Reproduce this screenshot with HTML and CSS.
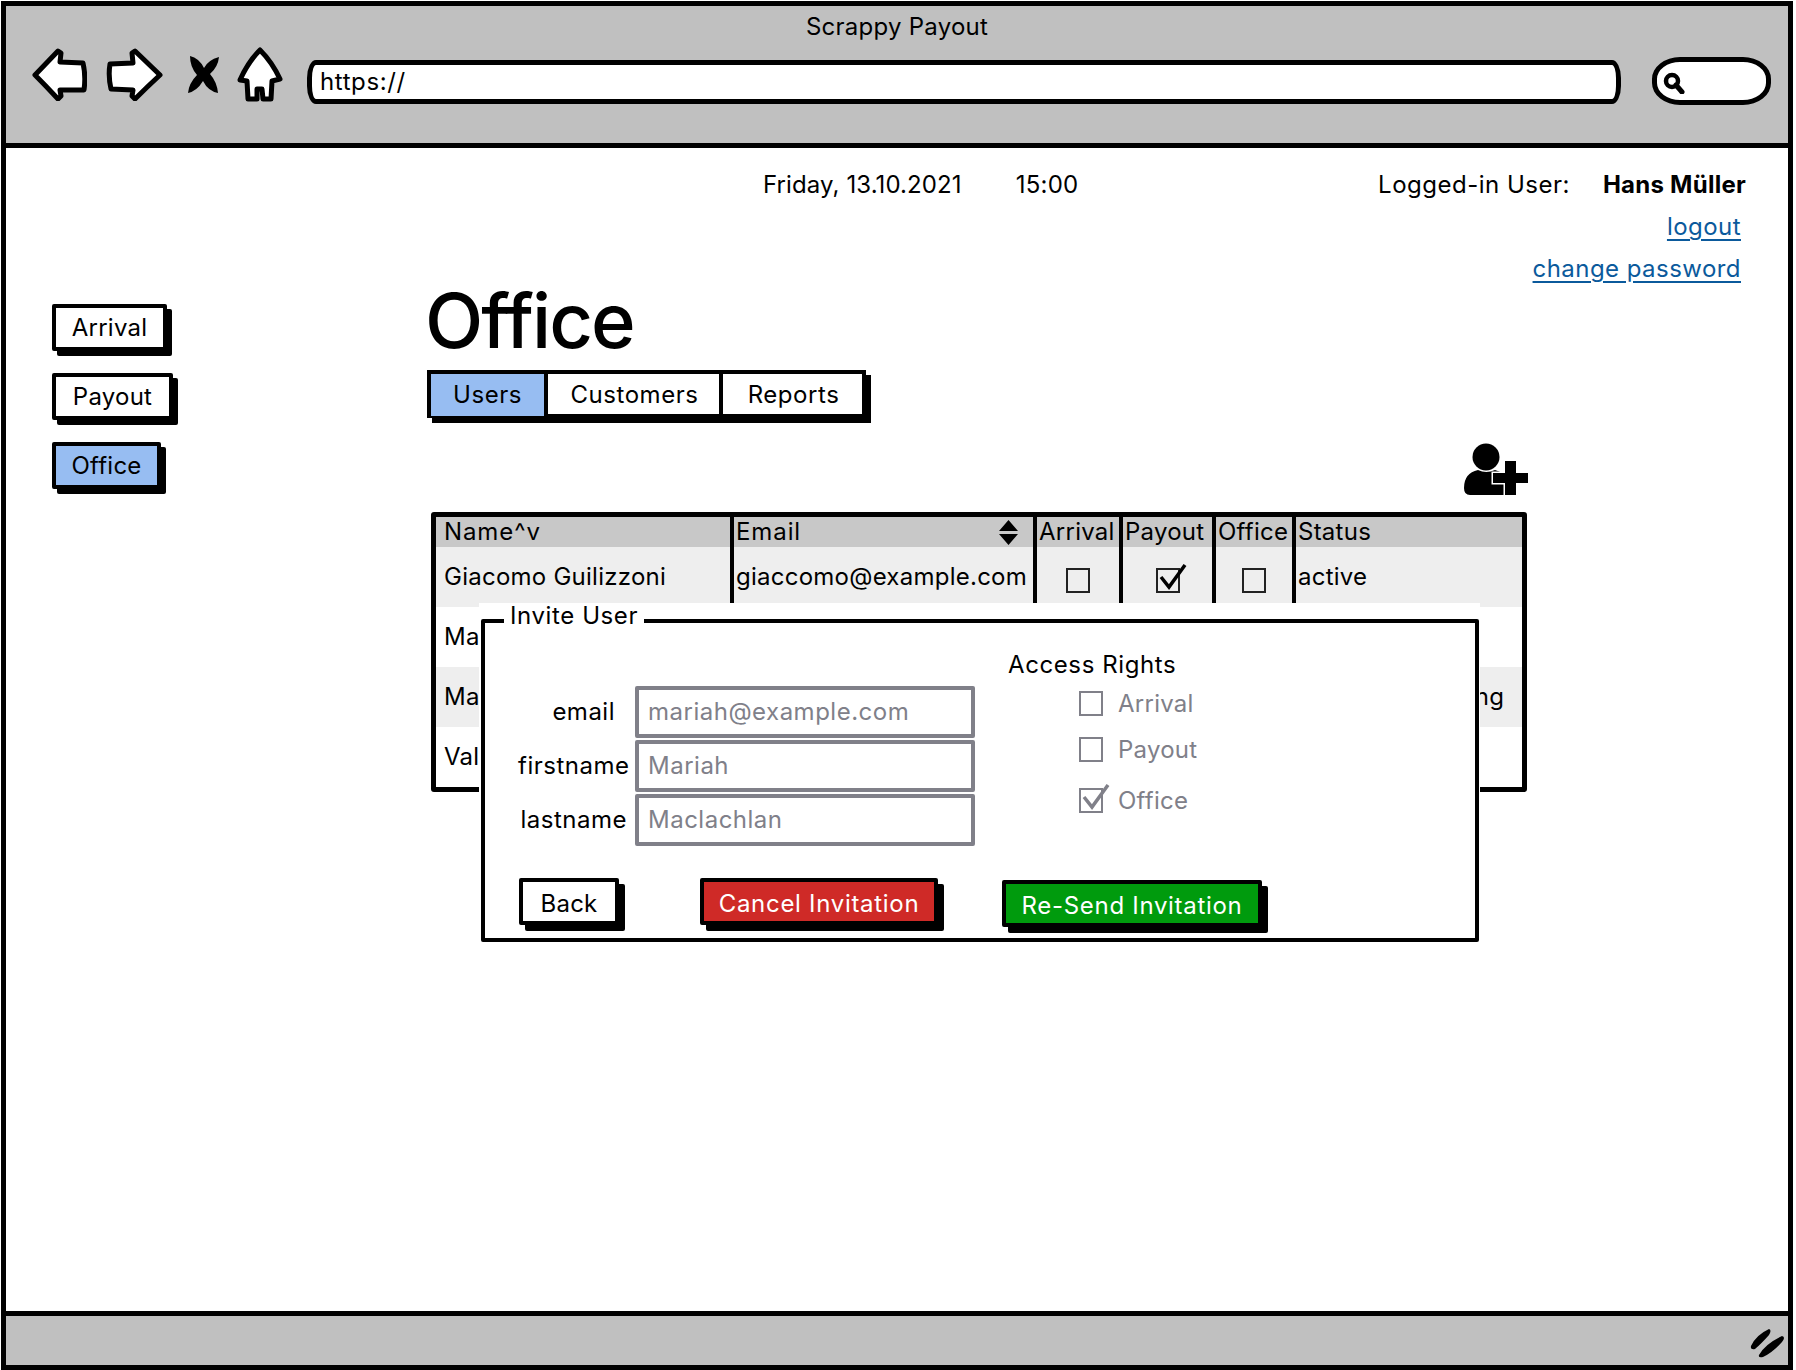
FILE: index.html
```html
<!DOCTYPE html>
<html lang="en">
<head>
  <meta charset="UTF-8">
  <title>Scrappy Payout</title>
  <link rel="stylesheet" href="styles.css">
</head>
<body>
  <div class="window">
    <header class="titlebar">
      <div class="app-title">Scrappy Payout</div>
      <div class="navrow">
        <svg class="nav-back" width="55" height="53" viewBox="0 0 55 53"><path d="M3 27 L26 3 L29 5 L28 14 L51 15 Q54 28 52 42 L28 42 L29 48 L26 51 Q14 38 3 27 Z"/></svg>
        <svg class="nav-forward" width="58" height="53" viewBox="0 0 58 53"><path d="M55 27 L30 3 L27 5 L28 15 L5 16 Q3 28 6 41 L28 42 L27 48 L30 51 Q42 39 55 27 Z"/></svg>
        <svg class="nav-stop" width="33" height="39" viewBox="0 0 33 39"><path d="M3 1 Q12 3 17 13 Q21 5 32 2 Q31 12 23 19 Q30 27 31 38 Q21 36 16 26 Q10 36 1 38 Q2 28 10 20 Q3 12 3 1 Z"/></svg>
        <svg class="nav-home" width="46" height="55" viewBox="0 0 46 55"><path d="M23 3 Q35 15 43 32 L35 34 L34 52 L26 52 L25 42 L20 42 L20 52 L11 52 L10 34 L3 33 Q11 15 23 3 Z"/></svg>
        <div class="urlbar">https://</div>
        <div class="searchbox">
          <svg width="22" height="22" viewBox="0 0 22 22"><circle cx="9" cy="9" r="6" fill="none" stroke="#000" stroke-width="4.5"/><path d="M13 13 L19 20" stroke="#000" stroke-width="4.5" stroke-linecap="round"/></svg>
        </div>
      </div>
    </header>

    <main class="page">
      <div class="meta">
        <span class="meta-date">Friday, 13.10.2021</span>
        <span class="meta-time">15:00</span>
        <div class="meta-user">
          <div class="meta-login"><span class="login-label">Logged-in User:</span><b>Hans Müller</b></div>
          <a href="#" class="meta-link">logout</a>
          <a href="#" class="meta-link">change password</a>
        </div>
      </div>

      <div class="layout">
        <nav class="sidenav">
          <a href="#" class="btn side-arrival">Arrival</a>
          <a href="#" class="btn side-payout">Payout</a>
          <a href="#" class="btn side-office active">Office</a>
        </nav>

        <section class="office">
          <h1>Office</h1>
          <div class="tabs">
            <a href="#" class="tab active">Users</a>
            <a href="#" class="tab">Customers</a>
            <a href="#" class="tab">Reports</a>
          </div>
          <div class="tools">
            <svg width="64" height="52" viewBox="0 0 64 52">
              <circle cx="22" cy="14" r="13.5"/>
              <path d="M0 45 Q0 30 14 27 Q22 31 31 27 Q40 29 44 38 L44 52 L6 52 Q0 52 0 45 Z"/>
              <path class="plus" d="M41 18 H52 V30 H64 V40 H52 V52 H41 V40 H29 V30 H41 Z"/>
            </svg>
          </div>
          <table class="users">
            <colgroup>
              <col class="c-name"><col class="c-email"><col class="c-arrival"><col class="c-payout"><col class="c-office"><col>
            </colgroup>
            <thead>
              <tr>
                <th>Name^v</th>
                <th>
                  <div class="sorthead">Email
                    <svg width="19" height="25" viewBox="0 0 19 25"><path d="M9.5 0 L19 11 H0 Z M0 14 H19 L9.5 25 Z"/></svg>
                  </div>
                </th>
                <th>Arrival</th>
                <th>Payout</th>
                <th>Office</th>
                <th>Status</th>
              </tr>
            </thead>
            <tbody>
              <tr class="alt">
                <td>Giacomo Guilizzoni</td>
                <td>giaccomo@example.com</td>
                <td class="mid"><span class="check"></span></td>
                <td class="mid"><span class="check on"><svg viewBox="0 0 30 30"><path d="M4 13 L12 23 L28 1"/></svg></span></td>
                <td class="mid"><span class="check"></span></td>
                <td>active</td>
              </tr>
              <tr>
                <td>Marco Botton</td>
                <td>marco@example.com</td>
                <td></td><td></td><td></td>
                <td>active</td>
              </tr>
              <tr class="alt">
                <td>Mariah Maclachlan</td>
                <td>mariah@example.com</td>
                <td></td><td></td><td></td>
                <td>invitation pending</td>
              </tr>
              <tr>
                <td>Valerie Liberty</td>
                <td>valerie@example.com</td>
                <td></td><td></td><td></td>
                <td>active</td>
              </tr>
            </tbody>
          </table>

          <div class="dialog">
            <div class="dialog-frame">
              <span class="dialog-legend">Invite User</span>
              <div class="dialog-body">
                <div class="fields">
                  <label class="field-label label-email">email</label>
                  <input type="text" placeholder="mariah@example.com">
                  <label class="field-label">firstname</label>
                  <input type="text" placeholder="Mariah">
                  <label class="field-label">lastname</label>
                  <input type="text" placeholder="Maclachlan">
                </div>
                <div class="rights">
                  <div class="rights-title">Access Rights</div>
                  <div class="rights-list">
                    <div class="right-row"><span class="check muted"></span>Arrival</div>
                    <div class="right-row"><span class="check muted"></span>Payout</div>
                    <div class="right-row last"><span class="check muted on"><svg viewBox="0 0 30 30"><path d="M4 13 L12 23 L28 1"/></svg></span>Office</div>
                  </div>
                </div>
              </div>
              <div class="dialog-actions">
                <button class="btn act-back">Back</button>
                <button class="btn act-cancel">Cancel Invitation</button>
                <button class="btn act-resend">Re-Send Invitation</button>
              </div>
            </div>
          </div>
        </section>
      </div>
    </main>

    <footer class="statusbar">
      <svg width="36" height="30" viewBox="0 0 36 30"><path d="M1 18 Q6 7 19 1 Q22 2 19 7 Q11 16 5 21 Q0 22 1 18 Z M9 27 Q15 16 32 8 Q36 9 32 14 Q23 24 13 29 Q8 30 9 27 Z"/></svg>
    </footer>
  </div>
</body>
</html>
```

FILE: styles.css
```css
html, body {
  margin: 0;
  padding: 0;
  background: #fff;
}
body {
  font-family: "Inter", "Liberation Sans", sans-serif;
  font-size: 24px;
  letter-spacing: .25px;
  color: #000;
}
a {
  color: inherit;
  text-decoration: none;
}
.window {
  box-sizing: border-box;
  width: 1792px;
  height: 1369px;
  margin: 1px 0 0 1px;
  border: 5px solid #000;
  display: flex;
  flex-direction: column;
  overflow: hidden;
}

/* browser chrome */
.titlebar {
  box-sizing: border-box;
  height: 142px;
  flex: none;
  background: #c0c0c0;
  border-bottom: 5px solid #000;
}
.app-title {
  text-align: center;
  line-height: 30px;
  padding-top: 6px;
}
.navrow {
  display: flex;
  align-items: center;
  height: 60px;
  margin-top: 2px;
  padding-left: 26px;
}
.navrow > svg {
  flex: none;
}
.navrow path {
  fill: #fff;
  stroke: #000;
  stroke-width: 5;
  stroke-linejoin: round;
}
.navrow .nav-stop path {
  fill: #000;
  stroke: none;
}
.nav-forward {
  margin-left: 18px;
}
.nav-stop {
  margin-left: 24px;
}
.nav-home {
  margin-left: 17px;
}
.urlbar {
  box-sizing: border-box;
  width: 1314px;
  height: 44px;
  margin: 16px 0 0 24px;
  padding-left: 8px;
  line-height: 34px;
  letter-spacing: .6px;
  background: #fff;
  border: 5px solid #000;
  border-radius: 9px / 18px;
}
.searchbox {
  box-sizing: border-box;
  width: 119px;
  height: 48px;
  margin: 14px 0 0 31px;
  padding: 9px 0 0 6px;
  background: #fff;
  border: 5px solid #000;
  border-radius: 28px / 22px;
}

/* page */
.page {
  flex: 1;
  min-height: 0;
}
.meta {
  display: flex;
  padding: 22px 42px 0 757px;
  line-height: 30px;
}
.meta-date {
  letter-spacing: .1px;
}
.meta-time {
  margin-left: 54px;
}
.meta-user {
  margin-left: auto;
  display: flex;
  flex-direction: column;
  align-items: flex-end;
  gap: 12px;
}
.meta-login {
  display: flex;
  gap: 33px;
}
.login-label {
  letter-spacing: .5px;
}
.meta-link {
  margin-right: 5px;
  color: #0b5a9c;
  letter-spacing: .45px;
  text-decoration: underline;
  text-underline-offset: 4px;
}
.layout {
  display: flex;
}
.sidenav {
  box-sizing: border-box;
  width: 421px;
  flex: none;
  padding: 20px 0 0 46px;
  display: flex;
  flex-direction: column;
  align-items: flex-start;
  gap: 22px;
}
.btn {
  box-sizing: border-box;
  display: block;
  height: 47px;
  font: inherit;
  line-height: 39px;
  letter-spacing: inherit;
  text-align: center;
  background: #fff;
  border: 4px solid #000;
  border-radius: 2px;
  box-shadow: 5px 5px 0 #000;
  padding: 0;
}
.btn.active {
  background: #97bdf2;
}
.side-arrival {
  width: 115px;
}
.side-payout {
  width: 121px;
}
.side-office {
  width: 109px;
}
.office {
  position: relative;
  flex: 1;
  min-width: 0;
}
h1 {
  margin: 3px 0 0 -2px;
  font-size: 76px;
  font-weight: 500;
  line-height: 66px;
  letter-spacing: -2px;
}
.tabs {
  box-sizing: border-box;
  display: grid;
  grid-template-columns: 113px 175px 143px;
  width: 439px;
  height: 48px;
  margin-top: 17px;
  border: 4px solid #000;
  box-shadow: 5px 5px 0 #000;
}
.tab {
  padding-left: 2px;
  line-height: 42px;
  letter-spacing: .55px;
  text-align: center;
  border-left: 4px solid #000;
}
.tab:first-child {
  border-left: none;
  padding-left: 0;
}
.tab.active {
  background: #97bdf2;
}
.tools {
  display: flex;
  justify-content: flex-end;
  width: 1101px;
  height: 94px;
  padding-top: 25px;
  box-sizing: border-box;
}
.tools .plus {
  stroke: #fff;
  stroke-width: 3;
  paint-order: stroke;
}

/* users table */
.users {
  table-layout: fixed;
  border-collapse: separate;
  border-spacing: 0;
  box-sizing: border-box;
  width: 1096px;
  margin-left: 4px;
  border: 5px solid #000;
  border-radius: 3px;
}
.c-name {
  width: 298px;
}
.c-email {
  width: 303px;
}
.c-arrival {
  width: 86px;
}
.c-payout {
  width: 93px;
}
.c-office {
  width: 80px;
}
.users th, .users td {
  padding: 0 0 0 2px;
  text-align: left;
  font-weight: 400;
  white-space: nowrap;
  overflow: visible;
}
.users th:first-child, .users td:first-child {
  padding-left: 8px;
}
.users th:nth-child(-n+2) {
  letter-spacing: .9px;
}
.users th:not(:last-child), .users td:not(:last-child) {
  border-right: 4px solid #000;
}
.users thead th {
  height: 30px;
  line-height: 30px;
  background: #c8c8c8;
}
.users tbody td {
  height: 60px;
  padding-bottom: 2px;
  box-sizing: border-box;
}
.users tr.alt td {
  background: #eee;
}
.users td.mid {
  text-align: center;
  padding: 4px 0 0;
}
.sorthead {
  display: flex;
  justify-content: space-between;
  align-items: center;
  padding-right: 15px;
}
.check {
  box-sizing: border-box;
  position: relative;
  display: inline-block;
  width: 24px;
  height: 25px;
  border: 2.5px solid #222;
  vertical-align: middle;
}
.check svg {
  position: absolute;
  left: -1px;
  top: -6px;
  width: 30px;
  height: 30px;
  fill: none;
  stroke: #000;
  stroke-width: 3.5;
}
.check.muted {
  border-color: #808089;
  flex: none;
}
.check.muted svg {
  stroke: #808089;
}

/* invite dialog */
.dialog {
  position: absolute;
  left: 52px;
  top: 319px;
  box-sizing: border-box;
  width: 1001px;
  padding: 16px 1px 0 2px;
  background: #fff;
}
.dialog-frame {
  position: relative;
  box-sizing: border-box;
  height: 323px;
  border: 4px solid #000;
  border-radius: 2px;
}
.dialog-legend {
  position: absolute;
  left: 19px;
  top: -20px;
  padding: 0 6px;
  line-height: 26px;
  letter-spacing: .6px;
  background: #fff;
}
.dialog-body {
  display: flex;
  align-items: flex-start;
  padding: 29px 0 0 33px;
}
.fields {
  display: grid;
  grid-template-columns: 109px 340px;
  grid-auto-rows: 52px;
  column-gap: 8px;
  row-gap: 2px;
  padding-top: 34px;
  align-items: center;
}
.field-label {
  text-align: right;
  white-space: nowrap;
  padding-bottom: 2px;
  letter-spacing: .5px;
}
.label-email {
  padding-right: 12px;
}
.fields input {
  box-sizing: border-box;
  width: 100%;
  height: 52px;
  padding: 0 9px 2px;
  font: inherit;
  letter-spacing: .5px;
  color: #808089;
  background: #fff;
  border: 4px solid #808089;
  border-radius: 2px;
  outline: none;
}
.fields input::placeholder {
  color: #808089;
  opacity: 1;
}
.rights {
  margin-left: 33px;
}
.rights-title {
  line-height: 25px;
  letter-spacing: .6px;
}
.rights-list {
  display: flex;
  flex-direction: column;
  gap: 21px;
  margin: 14px 0 0 71px;
}
.right-row {
  display: flex;
  align-items: center;
  gap: 15px;
  height: 25px;
  color: #808089;
}
.right-row.last {
  margin-top: 5px;
}
.dialog-actions {
  display: flex;
  align-items: flex-start;
  margin-top: 32px;
  padding-left: 34px;
}
.dialog-actions .btn {
  box-shadow: 6px 6px 0 #000;
  padding-top: 2px;
}
.act-back {
  width: 100px;
}
.act-cancel {
  width: 238px;
  margin-left: 81px;
  color: #fff;
  background: #cf2a27;
  letter-spacing: .7px;
}
.act-resend {
  width: 260px;
  margin: 2px 0 0 64px;
  color: #fff;
  background: #009b0d;
  letter-spacing: .7px;
}

.statusbar {
  box-sizing: border-box;
  height: 54px;
  flex: none;
  display: flex;
  justify-content: flex-end;
  align-items: center;
  padding: 4px 2px 0 0;
  background: #c0c0c0;
  border-top: 5px solid #000;
}
```
